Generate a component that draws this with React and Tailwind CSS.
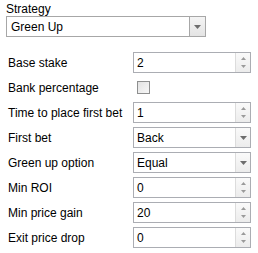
const font = { fontFamily: '"Liberation Sans", Arial, sans-serif' };

const Arrow = () => (
  <svg width="7" height="4" viewBox="0 0 7 4">
    <path d="M0 0h7L3.5 4z" fill="#6d6d6d" />
  </svg>
);

const Spin = ({ value }) => (
  <div className="flex h-[21px] w-[118px] border border-[#abadb3] bg-white">
    <div className="flex flex-1 items-center pl-[3px] text-[12px] text-black">{value}</div>
    <div className="flex w-[15px] flex-col items-center justify-center gap-[5px] border-l border-[#dcdcdc] bg-gradient-to-b from-[#fafafa] to-[#ececec]">
      <svg width="5" height="3" viewBox="0 0 5 3"><path d="M0 3h5L2.5 0z" fill="#9a9a9a" /></svg>
      <svg width="5" height="3" viewBox="0 0 5 3"><path d="M0 0h5L2.5 3z" fill="#9a9a9a" /></svg>
    </div>
  </div>
);

const Combo = ({ value }) => (
  <div className="flex h-[21px] w-[118px] border border-[#abadb3] bg-white">
    <div className="flex flex-1 items-center pl-[3px] text-[12px] text-black">{value}</div>
    <div className="flex w-[15px] items-center justify-center border-l border-[#dcdcdc] bg-gradient-to-b from-[#fafafa] to-[#ececec]">
      <Arrow />
    </div>
  </div>
);

const Row = ({ label, children }) => (
  <div className="flex h-[21px] items-center">
    <div className="w-[125px] text-[12px] text-black">{label}</div>
    {children}
  </div>
);

export default function App() {
  return (
    <div className="h-[253px] w-[258px] bg-white" style={font}>
      <div className="pl-[6px] pt-[2px]">
        <div className="h-[14px] text-[12px] leading-[14px] text-black">Strategy</div>
        <div className="flex h-[21px] w-[200px] border border-[#a7a7a7] bg-white">
          <div className="flex flex-1 items-center pl-[4px] text-[12px] text-black">Green Up</div>
          <div className="flex w-[16px] items-center justify-center border-l border-[#a7a7a7] bg-gradient-to-b from-[#f4f4f4] to-[#e4e4e4]">
            <Arrow />
          </div>
        </div>
      </div>
      <div className="mt-[15px] flex flex-col gap-[4px] pl-[8px]">
        <Row label="Base stake"><Spin value="2" /></Row>
        <Row label="Bank percentage">
          <div className="ml-[4px] h-[13px] w-[13px] border border-[#8e8f8f] bg-gradient-to-br from-[#e2e2e2] to-[#f7f7f7]" />
        </Row>
        <Row label="Time to place first bet"><Spin value="1" /></Row>
        <Row label="First bet"><Combo value="Back" /></Row>
        <Row label="Green up option"><Combo value="Equal" /></Row>
        <Row label="Min ROI"><Spin value="0" /></Row>
        <Row label="Min price gain"><Spin value="20" /></Row>
        <Row label="Exit price drop"><Spin value="0" /></Row>
      </div>
    </div>
  );
}
